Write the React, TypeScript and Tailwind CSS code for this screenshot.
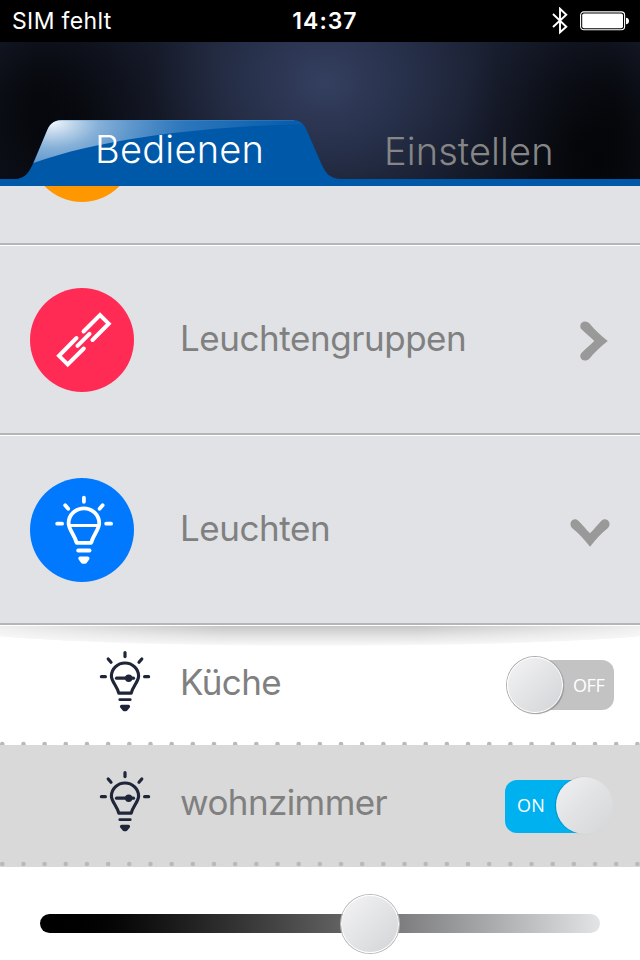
import React, { useState } from 'react';

type IconProps = { className?: string };

const BluetoothIcon = () => (
  <svg width="18" height="28" viewBox="0 0 18 28" fill="none" stroke="#fff" strokeWidth="1.9">
    <path d="M2 7 L15.3 19.8 L9 25.3 V1.7 L15.3 7.7 L2 20" />
  </svg>
);

const BatteryIcon = () => (
  <svg width="50" height="20" viewBox="0 0 50 20">
    <rect x="0.6" y="0.9" width="44" height="17.8" rx="3.2" fill="none" stroke="#fff" strokeWidth="1.1" />
    <rect x="2.2" y="2.4" width="40.8" height="14.8" rx="1.8" fill="#fff" />
    <path d="M46 6.7 Q49 7 49 10 Q49 13 46 13.3 Z" fill="#fff" />
  </svg>
);

const ChainIcon = () => (
  <svg width="104" height="104" viewBox="0 0 104 104" fill="none" stroke="#fff" strokeWidth="4">
    <g strokeLinecap="round">
      <path d="M53.5 43.5 L70 27 L78.7 35.7 L62.5 52" />
      <path d="M46.5 50 L29 67.8 L37.7 76.5 L53.8 60.5" />
      <path d="M47.5 57.8 L59.5 45.8" />
    </g>
  </svg>
);

const BulbRays = () => (
  <>
    <path d="M25.5 2.2 V6.3" />
    <path d="M6.8 9.7 L9.8 13.2" />
    <path d="M44.2 9.7 L41.2 13.2" />
    <path d="M-1.2 28.2 H3.7" />
    <path d="M47.8 28.2 H52.7" />
  </>
);

const GroupBulbIcon = () => (
  <svg width="104" height="104" viewBox="0 0 104 104" fill="none" stroke="#fff">
    <g transform="translate(28.4 17.5)" strokeWidth="3.8" strokeLinecap="round">
      <BulbRays />
      <path
        d="M18.2 47.3 C16 39 10.2 34 10.2 27.8 A15.3 15 0 0 1 40.8 27.8 C40.8 34 35 39 32.8 47.3 Z"
        strokeLinejoin="round"
      />
      <path d="M11 30 H40" strokeWidth="3.2" />
      <path d="M19.8 55 H31.2" />
      <path d="M21.8 62.8 H29.2 L26.7 66.3 H24.3 Z" strokeLinejoin="round" fill="#fff" />
    </g>
  </svg>
);

const LampIcon = ({ className }: IconProps) => (
  <svg
    className={className}
    width="52"
    height="62"
    viewBox="0 0 52 62"
    fill="none"
    stroke="#20263a"
    strokeWidth="3.2"
    strokeLinecap="round"
  >
    <path d="M26 2.7 V6.6" />
    <path d="M9.2 9 L12 12.2" />
    <path d="M42.8 9 L40 12.2" />
    <path d="M2.4 26.7 H6.4" />
    <path d="M45.6 26.7 H49.6" />
    <path
      d="M19.8 43.1 C18 36 12.4 31.5 12.4 26 A13.6 13 0 0 1 39.6 26 C39.6 31.5 34 36 32.2 43.1 Z"
      strokeLinejoin="round"
    />
    <path d="M17.5 28.2 H34.5" />
    <circle cx="29.7" cy="28.2" r="2.1" fill="#20263a" />
    <path d="M20.8 49.7 H31.2" strokeWidth="2.8" />
    <path d="M22.5 56.4 H29.5 L27 59.6 H25 Z" strokeLinejoin="round" fill="#20263a" />
  </svg>
);

const ArrowIcon = ({ className }: IconProps) => (
  <svg className={className} width="28" height="40" viewBox="0 0 28 40">
    <path
      d="M27.8 20 C20 14 14 8 9.6 2.6 C6.6 -0.8 1.2 0 0.4 4 C0 6 0.6 7.4 2 8.8 C6 12.6 10 15.8 14.3 20 C10 24.2 6 27.4 2 31.4 C0.6 32.8 0 34.2 0.4 36 C1.2 40 6.6 40.8 9.6 37.4 C14 32 20 26 27.8 20 Z"
      fill="#999"
    />
  </svg>
);

const TabShape = () => (
  <svg className="absolute inset-x-0 bottom-0" width="640" height="66" viewBox="0 0 640 66">
    <defs>
      <radialGradient id="shine" gradientUnits="userSpaceOnUse" cx="52" cy="2" r="240" gradientTransform="translate(0 1) scale(1 .55)">
        <stop offset="0" stopColor="#fff" stopOpacity=".95" />
        <stop offset=".2" stopColor="#dce9f6" stopOpacity=".6" />
        <stop offset=".55" stopColor="#9fc5ea" stopOpacity=".28" />
        <stop offset="1" stopColor="#9fc5ea" stopOpacity=".05" />
      </radialGradient>
    </defs>
    <path
      d="M0 59 H14 C26 59 30 51 34 41 L46 13 C49 5 53 0 62 0 H292 C301 0 304 4 307 11 L321 43 C325 52 329 59 342 59 H640 V66 H0 Z"
      fill="#0058a9"
    />
    <path
      d="M33.5 43 L46 13 C49 5 53 0 62 0 H292 C298 0 301 2 303 4.5 C230 5 110 15 33.5 43 Z"
      fill="url(#shine)"
    />
    <path d="M58 .5 H294" stroke="#5e99cf" strokeOpacity=".3" />
  </svg>
);

const StatusBar = () => (
  <div className="grid h-[42px] grid-cols-3 items-center bg-black text-[23px] text-white">
    <span className="pl-3 tracking-[0.35px]">SIM fehlt</span>
    <span className="pl-[10px] text-center font-semibold tracking-[1px]">14:37</span>
    <div className="flex items-center justify-end gap-[11px] pr-[10px]">
      <BluetoothIcon />
      <BatteryIcon />
    </div>
  </div>
);

const Header = () => (
  <header className="relative h-36 bg-[radial-gradient(ellipse_290px_250px_at_325px_40px,#343f60_0%,#2b3551cc_30%,#1c223588_60%,#1c223500_100%),radial-gradient(ellipse_150px_130px_at_82px_70px,#030305_0%,#05060add_35%,#05060a00_100%),radial-gradient(ellipse_120px_150px_at_575px_100px,#020203_0%,#040508dd_40%,#05060a00_100%),linear-gradient(to_bottom,#171c2b,#0e121d)]">
    <TabShape />
    <nav className="relative flex pt-20 text-[38px] font-light leading-[50px]">
      <button type="button" className="w-[288px] pl-[95px] text-left tracking-[0.25px] text-white">
        Bedienen
      </button>
      <button type="button" className="pl-24 pt-1 text-left tracking-[0.1px] text-[#868686]">
        Einstellen
      </button>
    </nav>
  </header>
);

type SectionProps = {
  title: string;
  badge: string;
  icon: React.ReactNode;
  isOpen?: boolean;
};

const Section = ({ title, badge, icon, isOpen }: SectionProps) => (
  <div className="flex h-[190px] items-center border-t border-t-white bg-[#e1e2e6] pb-px pl-[30px] pr-8 shadow-[inset_0_-2px_0_#b5b5b7]">
    <div className={`h-[104px] w-[104px] rounded-full ${badge}`}>{icon}</div>
    <span className="-mt-1 ml-[46px] flex-1 text-[35px] tracking-[-0.45px] text-[#808080]">
      {title}
    </span>
    <ArrowIcon className={isOpen ? 'mr-1 mt-[6px] rotate-90' : 'mt-[2px]'} />
  </div>
);

const knob =
  'rounded-full border border-white bg-linear-135 from-[#f4f4f5] via-[#e3e4e6] to-[#d3d4d7]';

const Toggle = ({ isOn, onClick }: { isOn: boolean; onClick: () => void }) =>
  isOn ? (
    <button
      type="button"
      onClick={onClick}
      className="flex h-[53px] w-[108px] items-center rounded-[12px] bg-linear-to-r from-[#00b1ef] from-70% to-transparent to-70% font-['Open_Sans',sans-serif] text-[18px] text-white"
    >
      <span className="-mt-[2px] w-[51px] shrink-0 pl-3 text-left tracking-[0.3px]">ON</span>
      <span className="-mt-[2px] h-[57px] w-[57px] shrink-0 rounded-full bg-linear-135 from-[#f1f1f2] via-[#e1e2e4] to-[#d5d6d8] shadow-[-1px_0_1px_#0003]" />
    </button>
  ) : (
    <button
      type="button"
      onClick={onClick}
      className="flex h-[50px] w-[108px] items-center rounded-[12px] bg-linear-to-r from-transparent from-40% to-[#c3c3c3] to-40% font-['Open_Sans',sans-serif] text-[18px] text-white"
    >
      <span className={`ml-px h-[56px] w-[56px] shrink-0 shadow-[0_0_0_1px_#aaa,1px_1px_1px_#777] ${knob}`} />
      <span className="pl-[10px] tracking-[-0.4px]">OFF</span>
    </button>
  );

// one grey dot every 21.17px
const DottedLine = ({ className }: IconProps) => (
  <svg className={className} width="640" height="6" viewBox="0 0 640 6">
    {Array.from({ length: 31 }, (_, i) => (
      <circle key={i} cx={2.3 + i * 21.17} cy="3" r="2.3" fill="#b9b9bb" />
    ))}
  </svg>
);

const PanelShadow = () => (
  <svg width="640" height="22" viewBox="0 0 640 22" className="block">
    <defs>
      <linearGradient id="panelFade" x1="0" y1="0" x2="0" y2="1">
        <stop offset="0" stopColor="#c6c6c6" />
        <stop offset=".5" stopColor="#e2e2e2" />
        <stop offset="1" stopColor="#f9f9f9" />
      </linearGradient>
      <linearGradient id="panelSides">
        <stop offset="0" stopColor="#fff" stopOpacity=".7" />
        <stop offset=".35" stopColor="#fff" stopOpacity="0" />
        <stop offset=".65" stopColor="#fff" stopOpacity="0" />
        <stop offset="1" stopColor="#fff" stopOpacity=".7" />
      </linearGradient>
    </defs>
    <path d="M0 1 H640 V11 C500 24 140 24 0 11 Z" fill="url(#panelFade)" />
    <path d="M0 1 H640 V11 C500 24 140 24 0 11 Z" fill="url(#panelSides)" />
  </svg>
);

const lampTitle = 'ml-[29px] flex-1 text-[35px] tracking-[-0.6px] text-[#808080]';

export default function App() {
  const [kitchen, setKitchen] = useState(false);
  const [livingRoom, setLivingRoom] = useState(true);

  return (
    <div className="flex h-[960px] w-[640px] flex-col overflow-hidden bg-white font-['Inter',sans-serif]">
      <StatusBar />
      <Header />
      <main>
        <div className="flex h-[59px] items-start overflow-hidden bg-[#e1e2e6] pl-[30px] shadow-[inset_0_-2px_0_#b5b5b7]">
          <div className="-mt-[88px] h-[104px] w-[104px] shrink-0 rounded-full bg-[#ff9800]" />
        </div>
        <Section title="Leuchtengruppen" badge="bg-[#ff2b55]" icon={<ChainIcon />} />
        <Section title="Leuchten" badge="bg-[#0079ff]" icon={<GroupBulbIcon />} isOpen />

        <div className="h-[120px] overflow-hidden">
          <PanelShadow />
          <div className="flex h-[92px] items-start pl-[99px] pr-[26px]">
            <LampIcon className="mt-[3px]" />
            <span className={`mt-[9px] ${lampTitle}`}>Küche</span>
            <div className="mt-[13px]">
              <Toggle isOn={kitchen} onClick={() => setKitchen(!kitchen)} />
            </div>
          </div>
          <DottedLine className="mt-[2px]" />
        </div>

        <div className="flex h-[122px] flex-col bg-[#d9d9d9]">
          <div className="flex h-[116px] items-start pl-[99px] pr-[27px]">
            <LampIcon className="mt-[25px]" />
            <span className={`mt-[31px] ${lampTitle}`}>wohnzimmer</span>
            <div className="mt-[35px]">
              <Toggle isOn={livingRoom} onClick={() => setLivingRoom(!livingRoom)} />
            </div>
          </div>
          <DottedLine />
        </div>

        <div className="flex h-[93px] items-start px-10 pt-[47px]">
          <div className="flex h-[19px] w-full items-center rounded-full bg-linear-to-r from-black to-[#e3e4e6] pl-[301px]">
            <div className={`h-[58px] w-[58px] shrink-0 shadow-[0_0_0_1px_#bbb] ${knob}`} />
          </div>
        </div>
      </main>
    </div>
  );
}
